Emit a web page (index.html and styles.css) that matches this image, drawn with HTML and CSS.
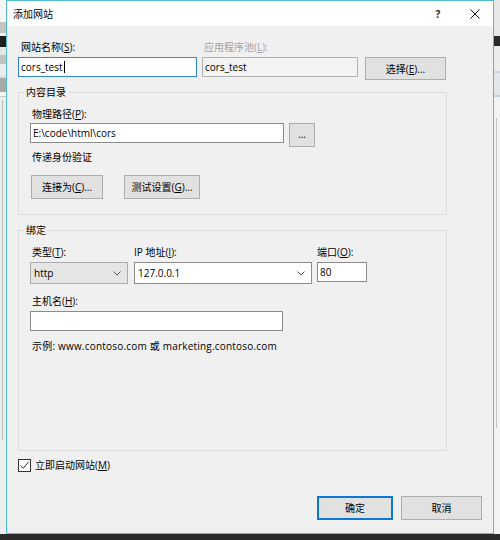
FILE: index.html
```html
<!DOCTYPE html>
<html lang="zh-CN">
<head>
<meta charset="utf-8">
<title>添加网站</title>
<link rel="stylesheet" href="styles.css">
</head>
<body>
<div class="desktop">
  <div class="side side-left"></div>
  <div class="dialog">
    <div class="titlebar">
      <span class="title">添加网站</span>
      <div class="title-btns">
        <span class="tb tb-help">?</span>
        <span class="tb tb-close"><svg width="10" height="10" viewBox="0 0 10 10"><path d="M0.5 0.5 L9.5 9.5 M9.5 0.5 L0.5 9.5" stroke="#111" stroke-width="1" fill="none"/></svg></span>
      </div>
    </div>
    <div class="content">
      <div class="row1">
        <div class="col col-name">
          <div class="lbl">网站名称(<u>S</u>):</div>
          <div class="tbox focused">cors_test<span class="caret"></span></div>
        </div>
        <div class="col col-pool">
          <div class="lbl disabled">应用程序池(<u>L</u>):</div>
          <div class="tbox readonly">cors_test</div>
        </div>
        <div class="col col-select">
          <div class="btn btn-select">选择(<u>E</u>)...</div>
        </div>
      </div>

      <fieldset class="group group-content">
        <legend>内容目录</legend>
        <div class="group-inner inner-content">
          <div class="lbl path-lbl">物理路径(<u>P</u>):</div>
          <div class="path-row">
            <div class="tbox path-box">E:\code\html\cors</div>
            <div class="btn btn-dots">...</div>
          </div>
          <div class="lbl auth-lbl">传递身份验证</div>
          <div class="auth-row">
            <div class="btn btn-connect">连接为(<u>C</u>)...</div>
            <div class="btn btn-test">测试设置(<u>G</u>)...</div>
          </div>
        </div>
      </fieldset>

      <fieldset class="group group-binding">
        <legend>绑定</legend>
        <div class="group-inner inner-binding">
          <div class="bind-row">
            <div class="bcol bcol-type">
              <div class="lbl">类型(<u>T</u>):</div>
              <div class="select">
                <span>http</span>
                <svg class="chev" width="8" height="5" viewBox="0 0 8 5"><path d="M0.5 0.5 L4 4 L7.5 0.5" stroke="#555" stroke-width="1" fill="none"/></svg>
              </div>
            </div>
            <div class="bcol bcol-ip">
              <div class="lbl">IP 地址(<u>I</u>):</div>
              <div class="combo">
                <span>127.0.0.1</span>
                <svg class="chev" width="8" height="5" viewBox="0 0 8 5"><path d="M0.5 0.5 L4 4 L7.5 0.5" stroke="#555" stroke-width="1" fill="none"/></svg>
              </div>
            </div>
            <div class="bcol bcol-port">
              <div class="lbl">端口(<u>O</u>):</div>
              <div class="tbox port-box">80</div>
            </div>
          </div>
          <div class="lbl host-lbl">主机名(<u>H</u>):</div>
          <div class="tbox host-box"></div>
          <div class="lbl example">示例: www.contoso.com 或 marketing.contoso.com</div>
        </div>
      </fieldset>

      <div class="check-row">
        <span class="checkbox"><svg width="11" height="11" viewBox="0 0 11 11"><path d="M1.5 5.5 L4.2 8.3 L9.6 1.8" stroke="#333" stroke-width="1" fill="none"/></svg></span>
        <span class="check-lbl">立即启动网站(<u>M</u>)</span>
      </div>

      <div class="btn-row">
        <div class="btn btn-ok">确定</div>
        <div class="btn btn-cancel">取消</div>
      </div>
    </div>
  </div>
  <div class="side side-right"></div>
</div>
</body>
</html>
```

FILE: styles.css
```css
* { box-sizing: border-box; }

html, body {
  margin: 0;
  padding: 0;
  width: 500px;
  height: 540px;
  overflow: hidden;
  background: #2b2b2b;
  font-family: "Open Sans", "Noto Sans CJK SC", sans-serif;
  font-size: 10px;
  line-height: 14px;
  color: #000;
}

u { text-decoration: underline; text-underline-offset: 1px; }

.desktop {
  display: grid;
  grid-template-columns: 6px 488px 6px;
  grid-template-rows: 534px 6px;
}

.side-left {
  background:
    linear-gradient(to right, transparent 2px, #bdbdbd 2px, #bdbdbd 3px, transparent 3px) 0 100px / 6px 340px no-repeat,
    linear-gradient(to bottom,
      #f5f5f5 0, #f5f5f5 22px,
      #c4c4c4 22px, #c4c4c4 33px,
      #f0f0f0 33px, #f0f0f0 36px,
      #1f1f1f 36px, #1f1f1f 47px,
      #e6e6e6 47px, #e6e6e6 55px,
      #c2c2c2 55px, #c2c2c2 64px,
      #ececec 64px, #ececec 76px,
      #d4e0ec 76px, #d4e0ec 78px,
      #a8a8a8 78px, #a8a8a8 92px,
      #f5f5f5 92px, #f5f5f5 96px,
      #c9c9c9 96px, #c9c9c9 97px,
      #ededed 97px, #ededed 534px);
}

.side-right {
  background:
    linear-gradient(to right, transparent 2px, #c4c4c4 2px, #c4c4c4 3px, transparent 3px) 0 118px / 6px 310px no-repeat,
    linear-gradient(to bottom,
      #e8e8e8 0, #e8e8e8 36px,
      #2a2a2a 36px, #2a2a2a 46px,
      #ececec 46px, #ececec 71px,
      #cbd5df 71px, #cbd5df 73px,
      #e2e7ec 73px, #e2e7ec 95px,
      #c6ced6 95px, #c6ced6 97px,
      #f3f3f3 97px, #f3f3f3 534px);
}

.dialog {
  grid-column: 2;
  grid-row: 1;
  border: 1px solid #4fbcd3;
  background: #f0f0f0;
  display: flex;
  flex-direction: column;
}

/* title bar */
.titlebar {
  height: 25px;
  background: #fff;
  display: flex;
  align-items: center;
  padding-left: 6px;
}
.title { flex: 1; font-size: 10px; }
.title-btns { display: flex; height: 25px; }
.tb {
  display: flex;
  align-items: center;
  justify-content: center;
  height: 25px;
}
.tb-help { width: 38px; font-weight: 700; font-size: 10px; color: #222; }
.tb-close { width: 36px; }

/* content */
.content {
  flex: 1;
  padding: 0 11px;
  display: flex;
  flex-direction: column;
}

.lbl { height: 14px; white-space: nowrap; }
.disabled { color: #a2a2a2; }

.tbox {
  height: 20px;
  border: 1px solid #8c8c8c;
  background: #fff;
  padding-left: 2px;
  display: flex;
  align-items: center;
  white-space: nowrap;
}
.tbox.focused { border-color: #2f86d8; }
.tbox.readonly { background: #f3f3f3; border-color: #b2b2b2; }
.caret {
  display: inline-block;
  width: 1px;
  height: 12px;
  background: #000;
  margin-left: 1px;
}

.btn {
  display: flex;
  align-items: center;
  justify-content: center;
  background: #e1e1e1;
  border: 1px solid #adadad;
  white-space: nowrap;
}

.row1 { display: flex; margin-top: 14px; }
.col { display: flex; flex-direction: column; }
.col .lbl { margin-bottom: 3px; }
.col-name { width: 179px; }
.col-name .lbl { padding-left: 3px; }
.col-pool { width: 156px; margin-left: 5px; }
.col-pool .lbl { padding-left: 2px; }
.col-select { width: 81px; margin-left: 7px; padding-top: 17px; }
.btn-select { height: 23px; }

/* group boxes */
.group {
  margin: 0;
  padding: 0;
  width: 429px;
  border: 1px solid #dcdcdc;
  min-width: 0;
}
.group legend {
  padding: 0 2px;
  margin-left: 5px;
  line-height: 14px;
  height: 14px;
}
.group-inner { padding-left: 11px; }

.group-content { margin-top: 5px; }
.inner-content { padding-bottom: 15px; }
.path-lbl { margin-top: 8px; padding-left: 2px; }
.path-row { display: flex; align-items: flex-start; margin-top: 2px; }
.path-box { width: 254px; }
.btn-dots { width: 26px; height: 24px; margin-left: 5px; padding-bottom: 3px; }
.auth-lbl { margin-top: 3px; padding-left: 2px; }
.auth-row { display: flex; margin-top: 11px; }
.btn-connect { width: 72px; height: 24px; margin-left: 1px; }
.btn-test { width: 76px; height: 24px; margin-left: 21px; }

.group-binding { margin-top: 8px; }
.inner-binding { padding-bottom: 97px; }
.bind-row { display: flex; margin-top: 8px; }
.bcol { display: flex; flex-direction: column; }
.bcol .lbl { margin-bottom: 3px; }
.bcol-type { width: 98px; }
.bcol-type .lbl { padding-left: 2px; }
.bcol-ip { width: 178px; margin-left: 6px; }
.bcol-port { width: 50px; margin-left: 5px; }

.select, .combo {
  height: 22px;
  display: flex;
  align-items: center;
  justify-content: space-between;
  padding: 0 6px 0 3px;
}
.select { background: #e5e5e5; border: 1px solid #acacac; }
.combo { background: #fff; border: 1px solid #8c8c8c; }
.port-box { width: 50px; }

.host-lbl { margin-top: 10px; padding-left: 2px; }
.host-box { width: 253px; margin-top: 3px; }
.example { margin-top: 8px; padding-left: 2px; letter-spacing: 0.2px; }

.check-row {
  display: flex;
  align-items: center;
  margin-top: 7px;
  height: 14px;
}
.checkbox {
  width: 13px;
  height: 13px;
  border: 1px solid #333;
  background: #fff;
  display: flex;
  align-items: center;
  justify-content: center;
}
.check-lbl { margin-left: 4px; }

.btn-row {
  display: flex;
  justify-content: flex-end;
  margin-top: 24px;
}
.btn-ok {
  width: 76px;
  height: 24px;
  border: 2px solid #0a78d6;
}
.btn-cancel {
  width: 81px;
  height: 24px;
  margin-left: 8px;
}
```
